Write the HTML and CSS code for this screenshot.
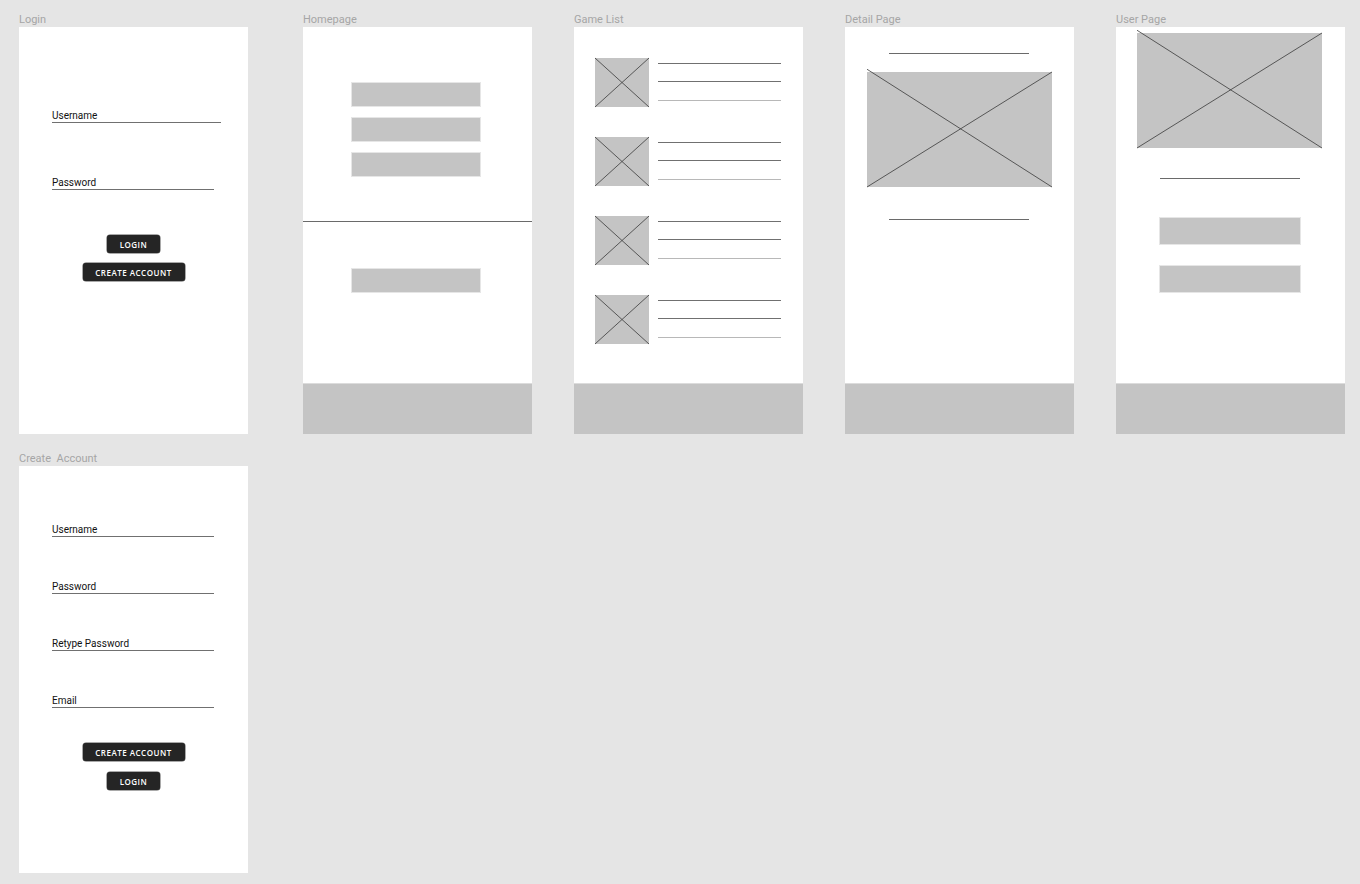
FILE: index.html
```html
<!DOCTYPE html>
<html lang="en">
<head>
<meta charset="utf-8">
<title>Wireframes</title>
<link rel="stylesheet" href="styles.css">
</head>
<body>
<div class="canvas">
  <div class="row">
    <section class="board board-login">
      <div class="board-title">Login</div>
      <div class="frame frame-login">
        <div class="field field-wide"><span class="field-label">Username</span></div>
        <div class="field field-pass"><span class="field-label">Password</span></div>
        <div class="btns">
          <div class="btn btn-small">LOGIN</div>
          <div class="btn btn-large">CREATE ACCOUNT</div>
        </div>
      </div>
    </section>

    <section class="board">
      <div class="board-title">Homepage</div>
      <div class="frame frame-tabbed">
        <div class="hp-main">
          <div class="hp-menu">
            <div class="block block-hp"></div>
            <div class="block block-hp"></div>
            <div class="block block-hp"></div>
          </div>
          <div class="hp-divider"></div>
          <div class="block block-hp block-hp-lone"></div>
        </div>
        <div class="tabbar"></div>
      </div>
    </section>

    <section class="board">
      <div class="board-title">Game List</div>
      <div class="frame frame-tabbed">
        <div class="gl-main">
          <div class="gl-row">
            <svg class="ph ph-thumb" viewBox="0 0 100 100" preserveAspectRatio="none"><line x1="0" y1="0" x2="100" y2="100"/><line x1="0" y1="100" x2="100" y2="0"/></svg>
            <div class="gl-lines"><div class="gl-line"></div><div class="gl-line gl-line-mid"></div><div class="gl-line gl-line-light"></div></div>
          </div>
          <div class="gl-row">
            <svg class="ph ph-thumb" viewBox="0 0 100 100" preserveAspectRatio="none"><line x1="0" y1="0" x2="100" y2="100"/><line x1="0" y1="100" x2="100" y2="0"/></svg>
            <div class="gl-lines"><div class="gl-line"></div><div class="gl-line gl-line-mid"></div><div class="gl-line gl-line-light"></div></div>
          </div>
          <div class="gl-row">
            <svg class="ph ph-thumb" viewBox="0 0 100 100" preserveAspectRatio="none"><line x1="0" y1="0" x2="100" y2="100"/><line x1="0" y1="100" x2="100" y2="0"/></svg>
            <div class="gl-lines"><div class="gl-line"></div><div class="gl-line gl-line-mid"></div><div class="gl-line gl-line-light"></div></div>
          </div>
          <div class="gl-row">
            <svg class="ph ph-thumb" viewBox="0 0 100 100" preserveAspectRatio="none"><line x1="0" y1="0" x2="100" y2="100"/><line x1="0" y1="100" x2="100" y2="0"/></svg>
            <div class="gl-lines"><div class="gl-line"></div><div class="gl-line gl-line-mid"></div><div class="gl-line gl-line-light"></div></div>
          </div>
        </div>
        <div class="tabbar"></div>
      </div>
    </section>

    <section class="board">
      <div class="board-title">Detail Page</div>
      <div class="frame frame-tabbed">
        <div class="dp-main">
          <div class="rule rule-dp rule-dp-top"></div>
          <svg class="ph ph-hero ph-dp" viewBox="0 0 100 100" preserveAspectRatio="none"><line x1="0" y1="-2.4" x2="100" y2="100"/><line x1="0" y1="100" x2="100" y2="0"/></svg>
          <div class="rule rule-dp rule-dp-bottom"></div>
        </div>
        <div class="tabbar"></div>
      </div>
    </section>

    <section class="board">
      <div class="board-title">User Page</div>
      <div class="frame frame-tabbed">
        <div class="up-main">
          <svg class="ph ph-hero ph-up" viewBox="0 0 100 100" preserveAspectRatio="none"><line x1="0" y1="-2.4" x2="100" y2="100"/><line x1="0" y1="100" x2="100" y2="0"/></svg>
          <div class="rule rule-up"></div>
          <div class="block block-up block-up-first"></div>
          <div class="block block-up block-up-second"></div>
        </div>
        <div class="tabbar"></div>
      </div>
    </section>
  </div>

  <div class="row row-second">
    <section class="board board-login">
      <div class="board-title board-title-pre">Create  Account</div>
      <div class="frame frame-create">
        <div class="fields">
          <div class="field field-ca"><span class="field-label">Username</span></div>
          <div class="field field-ca"><span class="field-label">Password</span></div>
          <div class="field field-ca"><span class="field-label">Retype Password</span></div>
          <div class="field field-ca"><span class="field-label">Email</span></div>
        </div>
        <div class="btns btns-create">
          <div class="btn btn-large">CREATE ACCOUNT</div>
          <div class="btn btn-small">LOGIN</div>
        </div>
      </div>
    </section>
  </div>
</div>
</body>
</html>
```

FILE: styles.css
```css
* { box-sizing: border-box; }

html, body {
  margin: 0;
  padding: 0;
  background: #e5e5e5;
}

body {
  font-family: Roboto, "Liberation Sans", Arial, sans-serif;
  width: 1360px;
  height: 884px;
  overflow: hidden;
}

.canvas {
  padding: 12px 0 0 19px;
}

.row {
  display: flex;
  gap: 42px;
}

.row-second {
  margin-top: 17px;
}

.board-login {
  margin-right: 13px;
}

.board-title {
  font-size: 11px;
  line-height: 15px;
  height: 15px;
  color: #a6a6a6;
  white-space: nowrap;
}

.board-title-pre {
  white-space: pre;
}

.frame {
  width: 229px;
  height: 407px;
  background: #ffffff;
}

/* ---------- form fields ---------- */
.field {
  height: 13px;
  margin-left: 33px;
  border-bottom: 1px solid #707070;
}

.field-label {
  display: block;
  font-size: 10px;
  line-height: 12px;
  color: #111111;
  white-space: nowrap;
}

.frame-login {
  padding-top: 83px;
}

.field-wide { width: 169px; }
.field-pass { width: 162px; margin-top: 54px; }

.fields {
  display: flex;
  flex-direction: column;
  gap: 44px;
}

.frame-create {
  padding-top: 58px;
}

.field-ca { width: 162px; }

/* ---------- buttons ---------- */
.btns {
  display: flex;
  flex-direction: column;
  align-items: center;
  gap: 10px;
  margin-top: 45px;
}

.btns-create {
  margin-top: 35px;
  gap: 11px;
}

.btn {
  height: 18px;
  background: #252525;
  border-radius: 3px;
  box-shadow: 0 0 0 0.5px #555555;
  color: #ffffff;
  font-family: "Open Sans", "Liberation Sans", sans-serif;
  font-weight: 600;
  font-size: 8px;
  letter-spacing: 0.5px;
  display: flex;
  align-items: center;
  justify-content: center;
  white-space: nowrap;
}

.btn-small { width: 53px; }
.btn-large { width: 102px; }

/* ---------- tabbed frames ---------- */
.frame-tabbed {
  display: flex;
  flex-direction: column;
}

.tabbar {
  margin-top: auto;
  height: 50px;
  background: #c4c4c4;
  box-shadow: 0 -1px 0 #dcdcdc;
}

.block {
  background: #c4c4c4;
  box-shadow: 0 0 0 1px #e6e6e6;
}

/* homepage */
.hp-main {
  padding-top: 56px;
}

.hp-menu {
  display: flex;
  flex-direction: column;
  gap: 12px;
}

.block-hp {
  width: 128px;
  height: 23px;
  margin-left: 49px;
}

.hp-divider {
  margin-top: 45px;
  height: 1px;
  background: #6a6a6a;
}

.block-hp-lone {
  margin-top: 47px;
}

/* game list */
.gl-main {
  padding: 31px 0 0 21px;
  display: flex;
  flex-direction: column;
  gap: 30px;
}

.gl-row {
  display: flex;
}

.ph {
  display: block;
  background: #c4c4c4;
  overflow: visible;
}

.ph line {
  stroke: #3a3a3a;
  stroke-width: 0.8;
  vector-effect: non-scaling-stroke;
}

.ph-thumb {
  width: 54px;
  height: 49px;
}

.gl-lines {
  margin-left: 9px;
  padding-top: 5px;
  display: flex;
  flex-direction: column;
}

.gl-line {
  width: 123px;
  height: 1px;
  background: #707070;
}

.gl-line-mid { margin-top: 17px; }

.gl-line-light {
  margin-top: 18px;
  background: #b8b8b8;
}

/* detail page */
.dp-main {
  padding-top: 26px;
}

.rule {
  height: 1px;
  background: #6a6a6a;
}

.rule-dp {
  width: 140px;
  margin-left: 44px;
}

.ph-hero {
  width: 185px;
  height: 115px;
}

.ph-dp {
  margin-top: 18px;
  margin-left: 22px;
}

.rule-dp-bottom {
  margin-top: 32px;
}

/* user page */
.up-main {
  padding-top: 6px;
}

.ph-up {
  margin-left: 21px;
}

.rule-up {
  width: 140px;
  margin-left: 44px;
  margin-top: 30px;
}

.block-up {
  width: 140px;
  height: 26px;
  margin-left: 44px;
}

.block-up-first { margin-top: 39px; }
.block-up-second { margin-top: 22px; }
```
